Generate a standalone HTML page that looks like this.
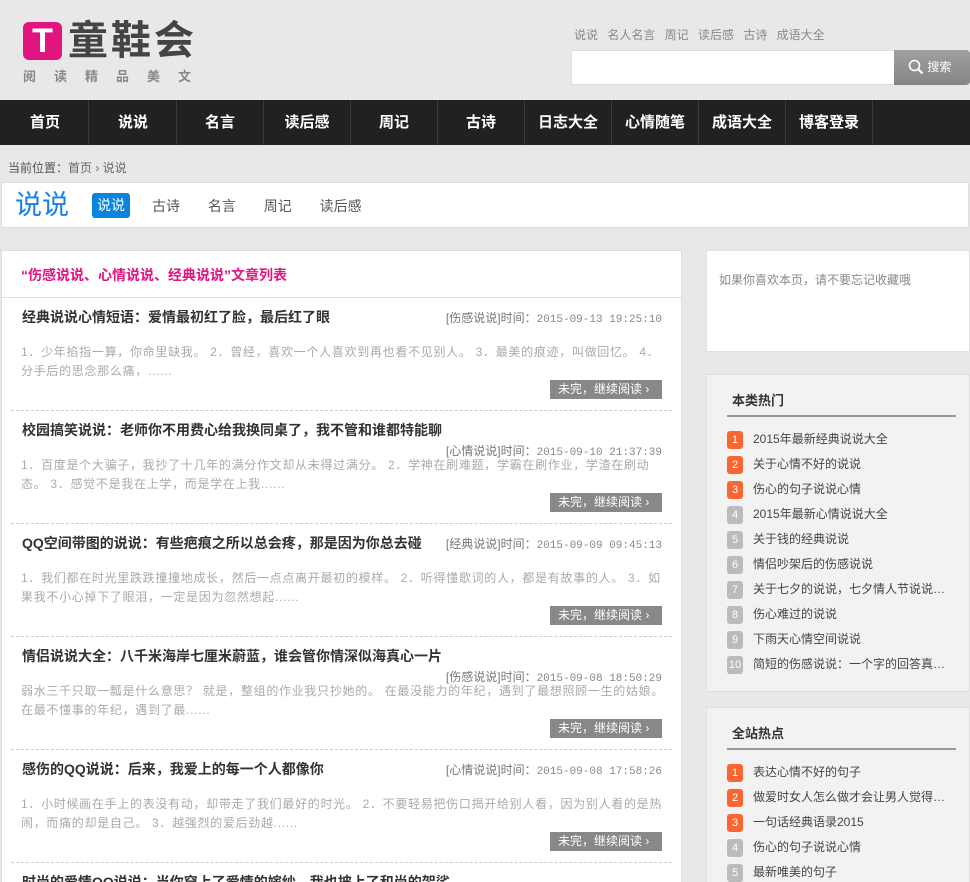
<!DOCTYPE html>
<html><head><meta charset="utf-8"><style>
*{margin:0;padding:0;box-sizing:border-box}
html,body{width:970px;height:882px;overflow:hidden}
body{background:#e8e8e8;font-family:"Liberation Sans","Noto Sans CJK SC",sans-serif;font-size:12px;color:#333;position:relative}
.a{position:absolute}
.logoT{left:23px;top:22px;width:39px;height:38px;background:#e0157f;border-radius:6px;color:#fff;font:bold 34px/38px "Liberation Sans",sans-serif;text-align:center}
.nav{left:0;top:100px;width:970px;height:45px;background:#212121}
.nav span{position:absolute;top:0;height:45px;line-height:45px;color:#fff;font-size:15px;font-weight:bold;text-align:center;width:87px;border-right:1px solid #3a3a3a;top:0}
.card{background:#fff}
.art{position:absolute;left:10px;width:661px;height:113px;border-bottom:1px dashed #ccc}
.art h3{position:absolute;left:11px;top:9px;font-size:14px;color:#333;font-weight:bold;white-space:nowrap}
.art .m{position:absolute;right:10px;top:11px;font-size:12px;color:#777;white-space:nowrap}
.art .m b{font-family:"Liberation Mono",monospace;font-weight:normal;color:#888;font-size:11px}
.art p{position:absolute;left:10px;top:45px;width:650px;line-height:19px;color:#aaa;font-size:12px;letter-spacing:0.7px}
.art .btn{position:absolute;right:10px;top:82px;width:112px;height:19px;background:#888;color:#fff;line-height:19px;font-size:12px;padding-left:8px}
.side{background:#f2f2f2;border:1px solid #e0e0e0;overflow:hidden}
.side h4{position:absolute;left:25px;top:15px;font-size:13px;font-weight:bold;color:#333}
.side .ln{position:absolute;left:20px;top:40px;width:229px;height:2px;background:#999}
.side li{list-style:none;position:absolute;left:20px;font-size:12px;color:#444;white-space:nowrap;width:220px;overflow:hidden;text-overflow:ellipsis}
.side li i{display:inline-block;width:16px;height:18px;border-radius:3px;background:#bbb;color:#fff;font-style:normal;text-align:center;line-height:18px;font-size:11px;margin-right:10px;vertical-align:middle}
.side li i.o{background:#f96631}
</style></head><body>
<div class="a logoT">T</div>
<div class="a" style="left:68px;top:17px;font-size:40px;font-weight:bold;color:#444;letter-spacing:3px;line-height:48px">童鞋会</div>
<div class="a" style="left:23px;top:66px;font-size:13px;color:#888;letter-spacing:18px;font-weight:bold">阅读精品美文</div>
<div class="a" style="left:574px;top:26px;font-size:12px;color:#888;word-spacing:6px">说说 名人名言 周记 读后感 古诗 成语大全</div>
<div class="a" style="left:571px;top:50px;width:324px;height:35px;background:#fff;border:1px solid #ddd"></div>
<div class="a" style="left:894px;top:50px;width:76px;height:35px;background:linear-gradient(#a0a0a0,#858585);border-radius:0 4px 4px 0;color:#fff;font-size:12px;line-height:35px;padding-left:14px"><svg width="16" height="16" style="vertical-align:-4px" viewBox="0 0 16 16"><circle cx="6.5" cy="6.5" r="5" fill="none" stroke="#fff" stroke-width="1.6"/><path d="M10 10l4.5 4.5" stroke="#fff" stroke-width="2.2"/></svg> 搜索</div>
<div class="a nav">
<span style="left:2px">首页</span><span style="left:90px">说说</span><span style="left:177px">名言</span><span style="left:264px">读后感</span><span style="left:351px">周记</span><span style="left:438px">古诗</span><span style="left:525px">日志大全</span><span style="left:612px">心情随笔</span><span style="left:699px">成语大全</span><span style="left:786px">博客登录</span>
</div>
<div class="a" style="left:8px;top:159px;font-size:12px;color:#555">当前位置：<span style="color:#666">首页 › 说说</span></div>
<div class="a card" style="left:1px;top:182px;width:968px;height:46px;border:1px solid #ddd"></div>
<div class="a" style="left:15px;top:187px;font-size:27px;color:#1a7fe6;line-height:36px">说说</div>
<div class="a" style="left:92px;top:193px;width:38px;height:25px;background:#0a85dd;border-radius:3px;color:#fff;font-size:14px;line-height:25px;text-align:center">说说</div>
<div class="a" style="left:152px;top:196px;font-size:14px;color:#555;word-spacing:24px">古诗 名言 周记 读后感</div>
<div class="a card" style="left:1px;top:250px;width:681px;height:632px;border:1px solid #ddd;border-bottom:0;overflow:hidden">
<div class="a" style="left:19px;top:14px;font-size:14px;font-weight:bold;color:#e0157f">“伤感说说、心情说说、经典说说”文章列表</div>
<div class="a" style="left:0;top:46px;width:681px;height:1px;background:#ddd"></div>
<div class="art" style="top:47px;left:9px"><h3>经典说说心情短语：爱情最初红了脸，最后红了眼</h3><div class="m">[伤感说说]时间：<b>2015-09-13 19:25:10</b></div><p>1．少年掐指一算，你命里缺我。 2．曾经，喜欢一个人喜欢到再也看不见别人。 3．最美的痕迹，叫做回忆。 4．分手后的思念那么痛，......</p><div class="btn">未完，继续阅读 ›</div></div>
<div class="art" style="top:160px;left:9px"><h3>校园搞笑说说：老师你不用费心给我换同桌了，我不管和谁都特能聊</h3><div class="m" style="top:31px">[心情说说]时间：<b>2015-09-10 21:37:39</b></div><p>1．百度是个大骗子，我抄了十几年的满分作文却从未得过满分。 2．学神在刷难题，学霸在刷作业，学渣在刷动态。 3．感觉不是我在上学，而是学在上我......</p><div class="btn">未完，继续阅读 ›</div></div>
<div class="art" style="top:273px;left:9px"><h3>QQ空间带图的说说：有些疤痕之所以总会疼，那是因为你总去碰</h3><div class="m">[经典说说]时间：<b>2015-09-09 09:45:13</b></div><p>1．我们都在时光里跌跌撞撞地成长，然后一点点离开最初的模样。 2．听得懂歌词的人，都是有故事的人。 3．如果我不小心掉下了眼泪，一定是因为忽然想起......</p><div class="btn">未完，继续阅读 ›</div></div>
<div class="art" style="top:386px;left:9px"><h3>情侣说说大全：八千米海岸七厘米蔚蓝，谁会管你情深似海真心一片</h3><div class="m" style="top:31px">[伤感说说]时间：<b>2015-09-08 18:50:29</b></div><p>弱水三千只取一瓢是什么意思？ 就是，整组的作业我只抄她的。  在最没能力的年纪，遇到了最想照顾一生的姑娘。  在最不懂事的年纪，遇到了最......</p><div class="btn">未完，继续阅读 ›</div></div>
<div class="art" style="top:499px;left:9px"><h3>感伤的QQ说说：后来，我爱上的每一个人都像你</h3><div class="m">[心情说说]时间：<b>2015-09-08 17:58:26</b></div><p>1．小时候画在手上的表没有动，却带走了我们最好的时光。 2．不要轻易把伤口揭开给别人看，因为别人看的是热闹，而痛的却是自己。 3．越强烈的爱后劲越......</p><div class="btn">未完，继续阅读 ›</div></div>
<div class="art" style="top:612px;left:9px;border:0;height:20px"><h3>时尚的爱情QQ说说：当你穿上了爱情的嫁纱，我也披上了和尚的袈裟</h3></div>
</div>
<div class="a side" style="left:706px;top:250px;width:264px;height:102px;background:#fff"><div class="a" style="left:12px;top:20px;color:#888">如果你喜欢本页，请不要忘记收藏哦</div></div>
<div class="a side" style="left:706px;top:374px;width:264px;height:318px"><h4>本类热门</h4><div class="ln"></div><ul>
<li style="top:55px"><i class="o">1</i>2015年最新经典说说大全</li>
<li style="top:80px"><i class="o">2</i>关于心情不好的说说</li>
<li style="top:105px"><i class="o">3</i>伤心的句子说说心情</li>
<li style="top:130px"><i>4</i>2015年最新心情说说大全</li>
<li style="top:155px"><i>5</i>关于钱的经典说说</li>
<li style="top:180px"><i>6</i>情侣吵架后的伤感说说</li>
<li style="top:205px"><i>7</i>关于七夕的说说，七夕情人节说说大全</li>
<li style="top:230px"><i>8</i>伤心难过的说说</li>
<li style="top:255px"><i>9</i>下雨天心情空间说说</li>
<li style="top:280px"><i>10</i>简短的伤感说说：一个字的回答真心伤</li>
</ul></div>
<div class="a side" style="left:706px;top:707px;width:264px;height:175px;border-bottom:0"><h4>全站热点</h4><div class="ln"></div><ul>
<li style="top:55px"><i class="o">1</i>表达心情不好的句子</li>
<li style="top:80px"><i class="o">2</i>做爱时女人怎么做才会让男人觉得舒服</li>
<li style="top:105px"><i class="o">3</i>一句话经典语录2015</li>
<li style="top:130px"><i>4</i>伤心的句子说说心情</li>
<li style="top:155px"><i>5</i>最新唯美的句子</li>
</ul></div>
</body></html>
